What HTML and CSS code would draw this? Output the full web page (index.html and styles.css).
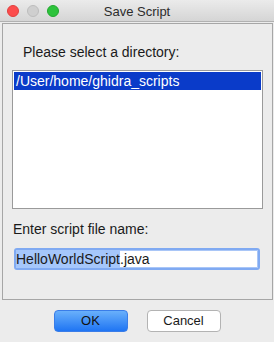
FILE: index.html
```html
<!DOCTYPE html>
<html lang="en">
<head>
    <meta charset="UTF-8">
    <title>Save Script</title>
    <link rel="stylesheet" href="styles.css">
</head>
<body>
    <div class="window">
        <div class="titlebar">
            <div class="lights">
                <span class="light red"></span>
                <span class="light grey"></span>
                <span class="light green"></span>
            </div>
            <div class="title">Save Script</div>
        </div>

        <div class="panel">
            <div class="label indent">Please select a directory:</div>
            <div class="list">
                <div class="row selected">/User/home/ghidra_scripts</div>
            </div>

            <div class="label">Enter script file name:</div>
            <div class="field"><span class="sel">HelloWorldScript</span>.java</div>
        </div>

        <div class="buttons">
            <button class="btn primary">OK</button>
            <button class="btn">Cancel</button>
        </div>
    </div>
</body>
</html>
```

FILE: styles.css
```css
body {
    margin: 0;
    padding: 0;
    font-family: "Liberation Sans", Arial, sans-serif;
    font-size: 14px;
    color: #1a1a1a;
}

.window {
    width: 274px;
    height: 342px;
    background: #ececec;
    display: flex;
    flex-direction: column;
    box-sizing: border-box;
}

.titlebar {
    position: relative;
    height: 22px;
    box-sizing: border-box;
    background: linear-gradient(#ebebeb, #d5d5d5);
    border-bottom: 1px solid #b1b1b1;
    display: flex;
    align-items: center;
    justify-content: center;
}

.lights {
    position: absolute;
    left: 7px;
    top: 5px;
    display: flex;
    gap: 8px;
}

.light {
    width: 12px;
    height: 12px;
    border-radius: 50%;
    box-sizing: border-box;
}

.red { background: #fc4c4c; border: 1px solid #e0403e; }
.grey { background: #cfcfcf; border: 1px solid #bdbdbd; }
.green { background: #2dc33c; border: 1px solid #22a82f; }

.title {
    font-size: 13px;
    color: #2c2c2c;
    margin-top: 1px;
}

.panel {
    margin: 1px 1px 0 2px;
    height: 277px;
    box-sizing: border-box;
    border: 1px solid #a6a6a6;
    padding: 0 9px 0 9px;
    display: flex;
    flex-direction: column;
}

.label {
    line-height: 16px;
    height: 16px;
    margin-top: 12px;
    padding-left: 1px;
}

.label.indent {
    margin-top: 20px;
    padding-left: 11px;
}

.list {
    margin-top: 10px;
    height: 139px;
    box-sizing: border-box;
    background: #fff;
    border: 1px solid #9a9a9a;
    padding: 1px;
}

.row {
    height: 18px;
    line-height: 18px;
    padding-left: 2px;
}

.row.selected {
    background: #0a3bc9;
    color: #fff;
}

.field {
    margin: 11px 2px 0 2px;
    width: 246px;
    height: 22px;
    box-sizing: border-box;
    background: #fff;
    border: 2px solid #80aaf2;
    border-radius: 3px;
    box-shadow: inset 0 0 0 1px #a9c6f7;
    line-height: 18px;
    white-space: nowrap;
}

.sel {
    background: #a5c7fb;
    display: inline-block;
    height: 18px;
}

.buttons {
    flex: 1;
    display: flex;
    justify-content: center;
    align-items: center;
    gap: 19px;
    padding-bottom: 1px;
}

.btn {
    width: 74px;
    height: 22px;
    box-sizing: border-box;
    font-family: inherit;
    font-size: 13px;
    color: #1a1a1a;
    background: #fff;
    border: 1px solid #b3b3b3;
    border-radius: 4px;
    padding: 0;
}

.btn.primary {
    background: linear-gradient(#69b0fb, #1f75f3);
    border-color: #3a7de8;
    color: #111;
}
```
